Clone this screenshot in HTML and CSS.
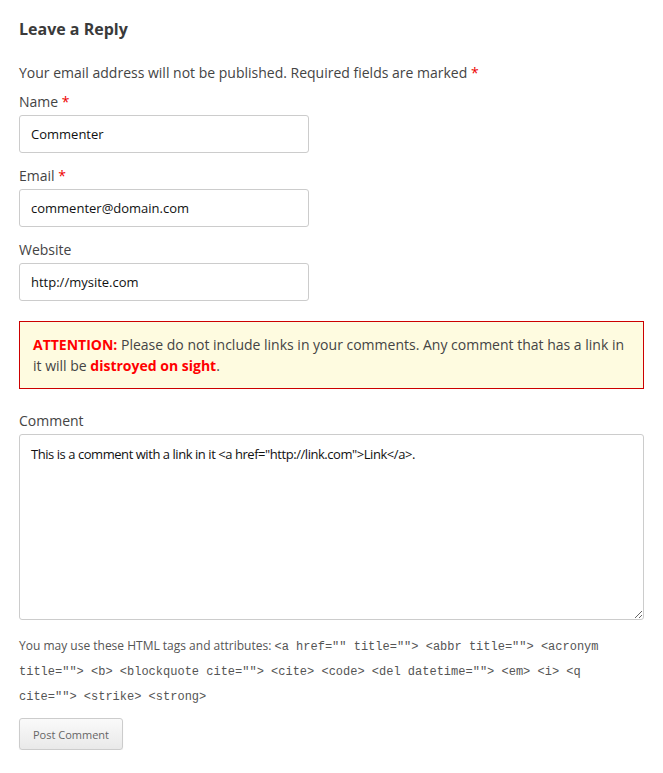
FILE: index.html
```html
<!DOCTYPE html>
<html>
<head>
<meta charset="utf-8">
<link rel="stylesheet" href="styles.css">
</head>
<body>
<div class="respond">
  <h3 class="reply-title">Leave a Reply</h3>
  <form class="comment-form">
    <p class="notes">Your email address will not be published. Required fields are marked <span class="req">*</span></p>
    <div class="field">
      <label class="lbl">Name <span class="req">*</span></label>
      <input class="txt" type="text" value="Commenter">
    </div>
    <div class="field">
      <label class="lbl">Email <span class="req">*</span></label>
      <input class="txt" type="text" value="commenter@domain.com">
    </div>
    <div class="field">
      <label class="lbl">Website</label>
      <input class="txt" type="text" value="http://mysite.com">
    </div>
    <div class="notice"><strong class="red">ATTENTION:</strong> Please do not include links in your comments. Any comment that has a link in it will be <strong class="red">distroyed on sight</strong>.</div>
    <div class="field">
      <label class="lbl">Comment</label>
      <textarea class="area">This is a comment with a link in it &lt;a href="http://link.com"&gt;Link&lt;/a&gt;.</textarea>
    </div>
    <p class="allowed">You may use these HTML tags and attributes: <code>&lt;a href="" title=""&gt; &lt;abbr title=""&gt; &lt;acronym title=""&gt; &lt;b&gt; &lt;blockquote cite=""&gt; &lt;cite&gt; &lt;code&gt; &lt;del datetime=""&gt; &lt;em&gt; &lt;i&gt; &lt;q cite=""&gt; &lt;strike&gt; &lt;strong&gt;</code></p>
    <button class="submit" type="button">Post Comment</button>
  </form>
</div>
</body>
</html>
```

FILE: styles.css
```css
html, body {
  margin: 0;
  padding: 0;
  background: #fff;
}
body {
  font-family: "Open Sans", "Liberation Sans", sans-serif;
  color: #444;
}
.respond {
  padding: 17px 19px 0 19px;
}
.reply-title {
  margin: 0;
  font-size: 16px;
  line-height: 24px;
  font-weight: 700;
  color: #3a3a3a;
}
.comment-form {
  display: flex;
  flex-direction: column;
  align-items: flex-start;
}
.notes {
  margin: 20px 0 0 0;
  font-size: 14px;
  line-height: 24px;
}
.req {
  color: #e00;
}
.field {
  display: flex;
  flex-direction: column;
  align-items: stretch;
  margin-top: 7px;
}
.field + .field {
  margin-top: 13px;
}
.lbl {
  font-size: 14px;
  line-height: 20px;
  margin-bottom: 3px;
}
.txt {
  box-sizing: border-box;
  width: 290px;
  height: 38px;
  border: 1px solid #ccc;
  border-radius: 3px;
  padding: 0 11px;
  font-family: "Open Sans", "Liberation Sans", sans-serif;
  font-size: 13px;
  color: #111;
  background: #fff;
  outline: none;
}
.notice {
  box-sizing: border-box;
  align-self: stretch;
  margin-top: 20px;
  padding: 12px 13px;
  border: 1px solid #c00;
  background: #fefbe0;
  font-size: 14px;
  line-height: 21px;
  color: #444;
}
.red {
  color: #f00;
  font-weight: 700;
}
.notice + .field {
  margin-top: 22px;
  align-self: stretch;
}
.area {
  display: block;
  box-sizing: border-box;
  width: 100%;
  height: 186px;
  border: 1px solid #ccc;
  border-radius: 3px;
  padding: 10px 11px;
  font-family: "Open Sans", "Liberation Sans", sans-serif;
  font-size: 13px;
  letter-spacing: -0.45px;
  line-height: 18px;
  color: #111;
  resize: vertical;
  outline: none;
}
.allowed {
  margin: 14px 0 0 0;
  font-size: 12px;
  line-height: 24px;
  color: #555;
}
.allowed code {
  font-family: "Liberation Mono", monospace;
  font-size: 12px;
  color: #555;
}
.submit {
  margin-top: 9px;
  height: 32px;
  padding: 0 13px;
  border: 1px solid #ccc;
  border-radius: 3px;
  background: linear-gradient(#fafafa, #e9e9e9);
  box-shadow: 0 1px 1px rgba(0,0,0,0.08);
  font-family: "Open Sans", "Liberation Sans", sans-serif;
  font-size: 11px;
  color: #666;
}
```
